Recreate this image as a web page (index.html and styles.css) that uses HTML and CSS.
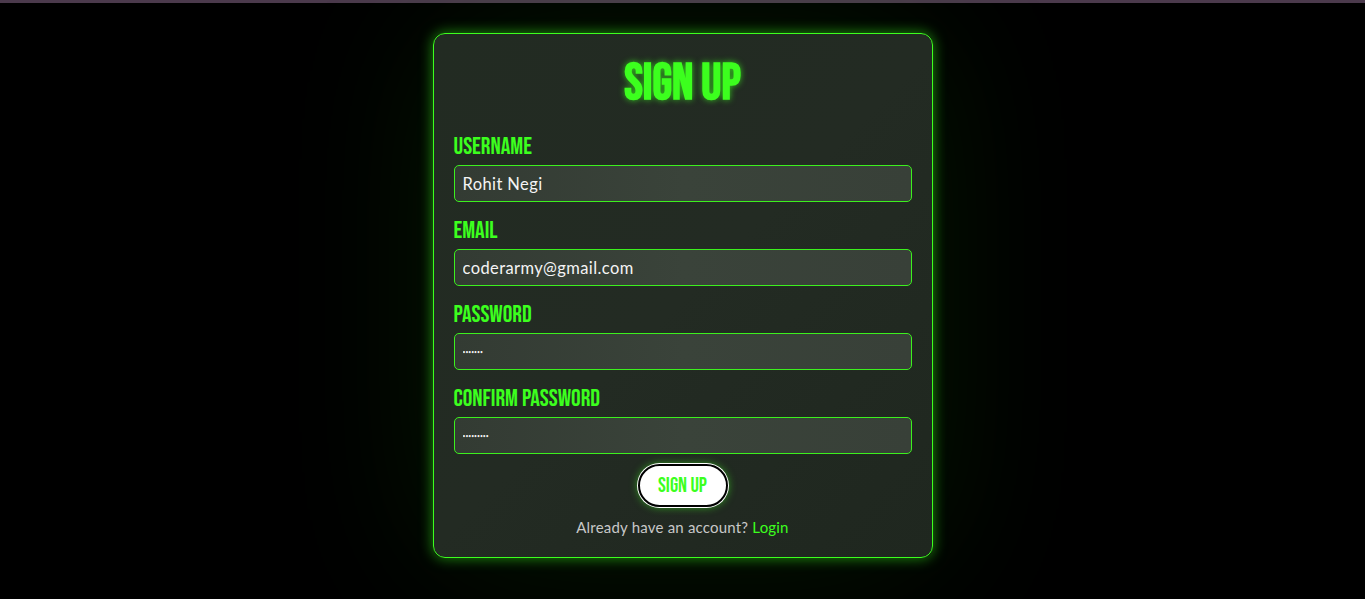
FILE: index.html
```html
<!DOCTYPE html>
<html lang="en">
<head>
<meta charset="utf-8">
<title>Sign Up</title>
<link rel="stylesheet" href="styles.css">
</head>
<body>
<div class="topbar"></div>
<main class="page">
  <form class="card">
    <h1 class="title">SIGN UP</h1>
    <div class="fields">
      <div class="field">
        <label class="label">USERNAME</label>
        <input class="input" type="text" value="Rohit Negi">
      </div>
      <div class="field">
        <label class="label">EMAIL</label>
        <input class="input" type="text" value="coderarmy@gmail.com">
      </div>
      <div class="field">
        <label class="label">PASSWORD</label>
        <input class="input input-pass" type="password" value="1234567">
      </div>
      <div class="field">
        <label class="label">CONFIRM PASSWORD</label>
        <input class="input input-pass" type="password" value="123456789">
      </div>
    </div>
    <div class="actions">
      <button class="btn" type="button">SIGN UP</button>
    </div>
    <p class="footer">Already have an account? <a class="link" href="#">Login</a></p>
  </form>
</main>
</body>
</html>
```

FILE: styles.css
```css
html, body {
  margin: 0;
  padding: 0;
  height: 100%;
}
body {
  background: #000;
  font-family: "Lato", "Noto Sans", sans-serif;
  overflow: hidden;
}
.topbar {
  height: 3px;
  background: #4b3a4c;
}
.page {
  display: flex;
  justify-content: center;
  padding-top: 30px;
}
.card {
  width: 458px;
  padding: 20px 20px 20px;
  border: 1px solid #3cff1e;
  border-radius: 12px;
  background: linear-gradient(135deg, #222b22 0%, #232b23 50%, #1f271f 100%);
  box-shadow: 0 0 14px rgba(60, 255, 30, 0.55), 0 0 160px rgba(40, 200, 20, 0.12);
  display: flex;
  flex-direction: column;
}
.title {
  margin: 0 0 20px;
  text-align: center;
  color: #3cff1e;
  font-family: "Bebas Neue", "Liberation Sans Narrow", "DejaVu Sans Condensed", sans-serif;
  font-weight: 700;
  font-size: 50px;
  line-height: 60px;
  text-shadow: 0 0 6px rgba(60, 255, 30, 0.7);
}
.fields {
  display: flex;
  flex-direction: column;
  gap: 16px;
}
.field {
  display: flex;
  flex-direction: column;
}
.label {
  color: #3cff1e;
  font-family: "Bebas Neue", "Liberation Sans Narrow", "DejaVu Sans Condensed", sans-serif;
  font-weight: 400;
  font-size: 24px;
  line-height: 26px;
  margin-bottom: 5px;
}
.input {
  -webkit-appearance: none;
  appearance: none;
  box-sizing: border-box;
  width: 100%;
  height: 37px;
  padding: 0 8px;
  border: 1px solid #3cf01e;
  border-radius: 5px;
  background-color: #373f37;
  background-image: linear-gradient(90deg, #333b33 0%, #3a433a 50%, #384038 100%);
  background-clip: padding-box;
  color: #f4f4f4;
  font-family: "Lato", "Noto Sans", sans-serif;
  font-size: 16.5px;
  letter-spacing: 0.4px;
  outline: none;
}
.input-pass {
  font-size: 5px;
  letter-spacing: 0;
}
.actions {
  display: flex;
  justify-content: center;
  margin-top: 10px;
}
.btn {
  width: 90px;
  height: 43px;
  border: 2px solid #000;
  border-radius: 22px;
  background: #fff;
  color: #3cff1e;
  font-family: "Bebas Neue", "Liberation Sans Narrow", "DejaVu Sans Condensed", sans-serif;
  font-weight: 400;
  font-size: 21px;
  box-shadow: 0 0 0 1px #fff, 0 0 8px rgba(60, 255, 30, 0.6);
  cursor: pointer;
}
.footer {
  margin: 10px 0 0;
  text-align: center;
  color: #c8c8c8;
  font-size: 15px;
  line-height: 20px;
  letter-spacing: 0.2px;
}
.link {
  color: #3cff1e;
  text-decoration: none;
}
```
